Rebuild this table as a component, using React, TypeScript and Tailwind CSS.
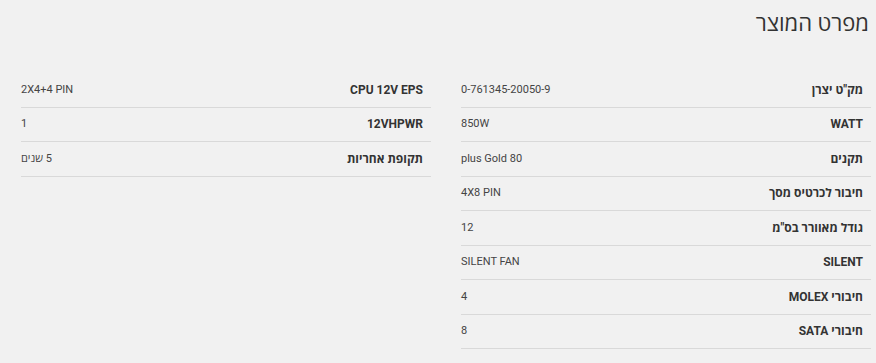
const RIGHT_SPECS: [string, string][] = [
  ['מק"ט יצרן', "0-761345-20050-9"],
  ["WATT", "850W"],
  ["תקנים", "plus Gold 80"],
  ["חיבור לכרטיס מסך", "4X8 PIN"],
  ['גודל מאוורר בס"מ', "12"],
  ["SILENT", "SILENT FAN"],
  ["חיבורי MOLEX", "4"],
  ["חיבורי SATA", "8"],
];

const LEFT_SPECS: [string, string][] = [
  ["CPU 12V EPS", "2X4+4 PIN"],
  ["12VHPWR", "1"],
  ["תקופת אחריות", "5 שנים"],
];

function SpecTable({ rows }: { rows: [string, string][] }) {
  return (
    <div className="flex flex-col">
      {rows.map(([label, value]) => (
        <div
          key={label}
          className="flex h-[34.5px] items-center justify-between border-b border-[#d9d9d9] pr-2"
        >
          <span className="text-[12px] font-bold text-[#333]">{label}</span>
          <span className="text-[11px] text-[#444]" dir="auto">
            {value}
          </span>
        </div>
      ))}
    </div>
  );
}

export default function App() {
  return (
    <div
      dir="rtl"
      className="min-h-[363px] w-[876px] bg-[#f1f1f1] pl-[21px] pr-[5px] font-[Roboto,'Open_Sans','Liberation_Sans',sans-serif]"
    >
      <h2 className="pr-[2px] pt-[8px] text-[22px] leading-[32px] text-[#333]">מפרט המוצר</h2>
      <div className="mt-[33px] grid grid-cols-2 gap-[30px]">
        <SpecTable rows={RIGHT_SPECS} />
        <SpecTable rows={LEFT_SPECS} />
      </div>
    </div>
  );
}
